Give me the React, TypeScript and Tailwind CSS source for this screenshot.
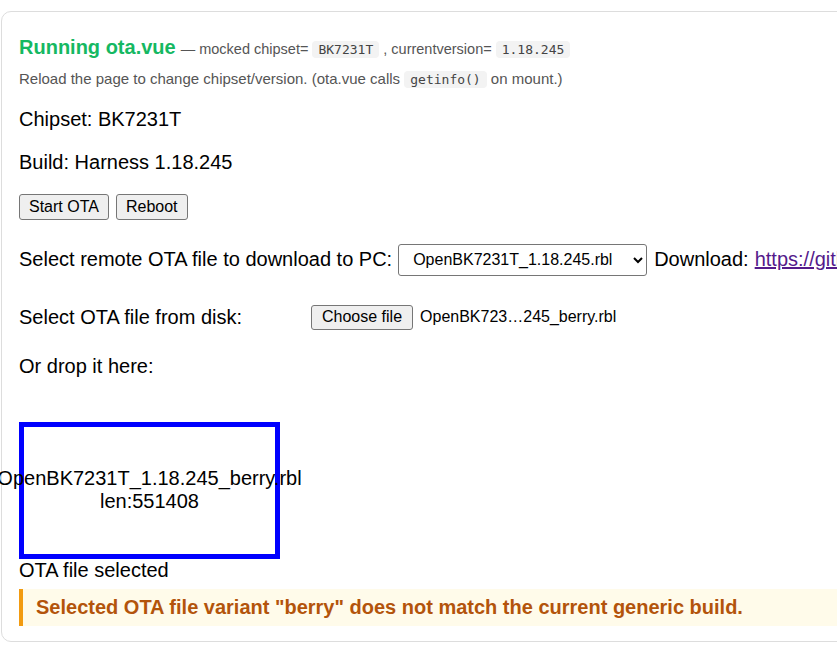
import React from 'react';

function Chip({ children }: { children: React.ReactNode }) {
  return (
    <code className="rounded-[4px] bg-[#f3f3f3] px-[6px] py-[1px] text-[13px] leading-[18px] text-[#444] font-['DejaVu_Sans_Mono',monospace]">
      {children}
    </code>
  );
}

function Btn({ children }: { children: React.ReactNode }) {
  return (
    <button className="h-[26px] shrink-0 rounded-[3px] border border-[#767676] bg-[#efefef] px-[9px] text-[16px] leading-[18px] text-black">
      {children}
    </button>
  );
}

export default function App() {
  return (
    <div className="w-full overflow-hidden bg-white font-['Liberation_Sans',Arial,sans-serif] text-black">
      <div className="mt-[11px] ml-px w-[1400px] rounded-[10px] border border-[#dddddd] pl-[17px] pr-[18px] pt-[24px] pb-[15px]">
        <div className="flex items-baseline whitespace-nowrap">
          <span className="text-[20px] font-bold leading-[23px] text-[#15b862]">Running ota.vue</span>
          <span className="ml-[5px] text-[14.5px] text-[#555]">
            — mocked chipset= <Chip>BK7231T</Chip> , currentversion= <Chip>1.18.245</Chip>
          </span>
        </div>
        <div className="mt-[9px] text-[15px] leading-[18px] text-[#555] whitespace-nowrap">
          Reload the page to change chipset/version. (ota.vue calls <Chip>getinfo()</Chip> on mount.)
        </div>

        <p className="mt-[19px] text-[20px] leading-[23px]">Chipset: BK7231T</p>
        <p className="mt-[20px] text-[20px] leading-[23px]">Build: Harness 1.18.245</p>

        <div className="mt-[20px] flex gap-[7px]">
          <Btn>Start OTA</Btn>
          <Btn>Reboot</Btn>
        </div>

        <div className="mt-[24px] flex h-[32px] items-center whitespace-nowrap text-[20px] leading-[23px]">
          <span className="shrink-0">Select remote OTA file to download to PC:</span>
          <select className="ml-[6px] h-[32px] w-[249px] shrink-0 rounded-[3px] border border-[#767676] bg-white pl-[10px] pr-[4px] text-[16px]">
            <option>OpenBK7231T_1.18.245.rbl</option>
          </select>
          <span className="ml-[7px] shrink-0">Download: </span>
          <a href="#" className="ml-[6px] shrink-0 text-[#551a8b] underline">
            https://github.com/openshwprojects/OpenBK7231T_App/releases/download/1.18.245/OpenBK7231T_1.18.245.rbl
          </a>
        </div>

        <div className="mt-[29px] flex h-[25px] items-center whitespace-nowrap">
          <span className="w-[292px] shrink-0 text-[20px] leading-[23px]">Select OTA file from disk:</span>
          <button className="h-[25px] shrink-0 rounded-[3px] border border-[#767676] bg-[#efefef] px-[10px] text-[16px] leading-[18px]">
            Choose file
          </button>
          <span className="ml-[7px] shrink-0 text-[16px]">OpenBK723…245_berry.rbl</span>
        </div>

        <p className="mt-[25px] text-[20px] leading-[23px]">Or drop it here:</p>

        <div className="mt-[44px] flex h-[137px] w-[261px] flex-col items-center justify-center border-[5px] border-[#0000ff] text-center text-[20px] leading-[23px] whitespace-nowrap">
          <span>OpenBK7231T_1.18.245_berry.rbl</span>
          <span>len:551408</span>
        </div>

        <p className="text-[20px] leading-[23px]">OTA file selected</p>

        <div className="mt-[7px] border-l-4 border-[#f29b11] bg-[#fffbea] py-[7px] pl-[13px] text-[20px] font-bold leading-[23px] text-[#b3540b] whitespace-nowrap">
          Selected OTA file variant "berry" does not match the current generic build.
        </div>
      </div>
    </div>
  );
}
